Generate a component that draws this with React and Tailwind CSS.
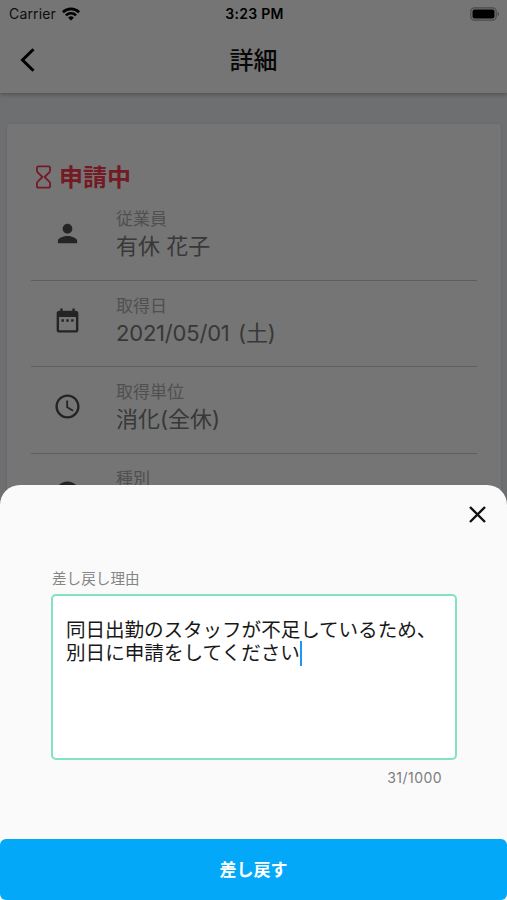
import React from "react";

const rows = [
  { id: "employee", label: "従業員", value: "有休 花子", icon: "person" },
  {
    id: "date",
    label: "取得日",
    value: "2021/05/01 (土)",
    icon: "calendar",
    spacing: "tracking-[-0.2px] [word-spacing:2.5px]",
  },
  { id: "unit", label: "取得単位", value: "消化(全休)", icon: "clock" },
  { id: "type", label: "種別", value: "有給休暇", icon: "help" },
];

const iconPaths = {
  person:
    "M12 12c2.21 0 4-1.79 4-4s-1.79-4-4-4-4 1.79-4 4 1.79 4 4 4zm0 2c-2.67 0-8 1.34-8 4v2h16v-2c0-2.66-5.33-4-8-4z",
  calendar:
    "M9 11H7v2h2v-2zm4 0h-2v2h2v-2zm4 0h-2v2h2v-2zm2-7h-1V2h-2v2H8V2H6v2H5c-1.11 0-1.99.9-1.99 2L3 20c0 1.1.89 2 2 2h14c1.1 0 2-.9 2-2V6c0-1.1-.9-2-2-2zm0 16H5V9h14v11z",
  clock:
    "M11.99 2C6.47 2 2 6.48 2 12s4.47 10 9.99 10C17.52 22 22 17.52 22 12S17.52 2 11.99 2zM12 20c-4.42 0-8-3.58-8-8s3.58-8 8-8 8 3.58 8 8-3.58 8-8 8zm.5-13H11v6l5.25 3.15.75-1.23-4.5-2.67z",
  help: "M12 2C6.48 2 2 6.48 2 12s4.48 10 10 10 10-4.48 10-10S17.52 2 12 2zm1 17h-2v-2h2v2z",
};

const StatusBar = () => (
  <div className="grid h-[27px] grid-cols-3 items-center pr-[7px] pl-[9px] font-[Inter,'Liberation_Sans',sans-serif] text-[14px] text-black">
    <div className="flex items-center gap-[6px]">
      <span className="tracking-[0.15px] text-[#222]">Carrier</span>
      <svg width="18" height="14" viewBox="0 0 18 14" fill="none" stroke="currentColor" strokeWidth="2.6">
        <path d="M.9 5.2a11.6 11.6 0 0 1 16.2 0" />
        <path d="M3.9 8.4a7.3 7.3 0 0 1 10.2 0" />
        <path d="M9 13.6 6.1 10.7a4.1 4.1 0 0 1 5.8 0z" fill="currentColor" stroke="none" />
      </svg>
    </div>
    <span className="text-center font-semibold tracking-[0.3px] whitespace-nowrap">3:23 PM</span>
    <svg className="justify-self-end" width="30" height="14" viewBox="0 0 30 14">
      <rect x=".8" y=".8" width="25.4" height="12.4" rx="3.6" fill="none" stroke="#a0a0a0" strokeWidth="1.2" />
      <rect x="2.5" y="2.5" width="22" height="9" rx="2" fill="#000" />
      <path d="M27.6 4.8c2 .8 2 3.6 0 4.4z" fill="#a0a0a0" />
    </svg>
  </div>
);

const Header = () => (
  <header className="relative z-10 h-[93px] shrink-0 bg-white shadow-[0_1px_5px_rgba(0,0,0,0.35)]">
    <StatusBar />
    <div className="grid h-[66px] grid-cols-[60px_1fr_60px] items-center">
      <svg className="ml-[18px]" width="18" height="26" viewBox="0 0 18 26" fill="none" stroke="#000" strokeWidth="3">
        <path d="M15.5 2.2 4.5 13l11 10.8" />
      </svg>
      <h1 className="pt-[1px] text-center text-[24px] font-medium text-[#111]">詳細</h1>
    </div>
  </header>
);

const DetailRow = ({ label, value, icon, spacing }) => (
  <div className="flex h-[86.6px] shrink-0 border-b-[1.5px] border-[#cecece] pt-[12px]">
    <div className="flex w-[85px] shrink-0 pt-[13px] pl-[21.5px]">
      <svg width="29" height="29" viewBox="0 0 24 24" fill="#505050">
        <path d={iconPaths[icon]} />
      </svg>
    </div>
    <div>
      <div className="text-[17px] leading-[26px] text-[#aeaeae]">{label}</div>
      <div className={`text-[22px] leading-[28px] text-[#7a7a7a] ${spacing || ""}`}>{value}</div>
    </div>
  </div>
);

const DetailCard = () => (
  <main className="mr-[6px] ml-[7px] mt-[31px] h-[800px] rounded-[3px] bg-white px-[24px] pt-[35px] shadow-[0_0_3px_rgba(0,0,0,0.12)]">
    <div className="flex h-[35px] items-center gap-[7px] pl-[4px] text-[#fb3a50]">
      <svg width="17" height="24" viewBox="0 0 17 24" fill="none" stroke="currentColor" strokeWidth="1.8" strokeLinejoin="round">
        <path d="M3.6 1.3h9.8a1.7 1.7 0 0 1 1.7 1.7v2.4c0 .8-.3 1.4-.8 1.900L9.600 12l4.700 4.700c.5.5.8 1.100.8 1.900V21a1.700 1.700 0 0 1-1.700 1.700H3.600A1.700 1.700 0 0 1 1.900 21v-2.400c0-.8.3-1.400.8-1.900L7.400 12 2.700 7.300c-.5-.5-.8-1.100-.8-1.900V3a1.700 1.700 0 0 1 1.700-1.700z" />
      </svg>
      <h2 className="pt-[2px] text-[24px] font-bold">申請中</h2>
    </div>
    {rows.map((row) => (
      <DetailRow key={row.id} {...row} />
    ))}
  </main>
);

const RejectSheet = () => (
  <section className="flex h-[415px] flex-col rounded-t-[20px] bg-[#fafafa]">
    <div className="flex h-[58px] justify-end pt-[20px] pr-[20px]">
      <svg width="19" height="19" viewBox="0 0 19 19" fill="none" stroke="#111" strokeWidth="2.4">
        <path d="m2 2 15 15M17 2 2 17" />
      </svg>
    </div>
    <div className="mr-[50px] ml-[51px] flex flex-1 flex-col pt-[24px]">
      <label className="pl-[1px] text-[14.6px] leading-[24px] text-[#858585]">差し戻し理由</label>
      <div className="mt-[3px] h-[166px] rounded-[5px] border-2 border-[#82e2c2] bg-white px-[13px] pt-[23px] text-[19.6px] leading-[23px] text-[#181818]">
        <p className="tracking-[-0.08px] whitespace-nowrap">同日出勤のスタッフが不足しているため、</p>
        <p className="flex items-center whitespace-nowrap">
          別日に申請をしてください
          <span className="-my-1 h-[25px] w-[2.5px] bg-[#2196f3]" />
        </p>
      </div>
      <div className="pt-[6px] pr-[15px] text-right text-[14px] leading-[24px] tracking-[0.45px] text-[#7d7d7d]">31/1000</div>
    </div>
    <button className="h-[61px] shrink-0 rounded-[6px] bg-[#03a9f8] pt-[2px] text-[17px] font-bold text-white">
      差し戻す
    </button>
  </section>
);

export default function App() {
  return (
    <div className="relative h-[900px] w-full overflow-hidden bg-[#eff2f7] font-[Inter,'Noto_Sans_CJK_JP',sans-serif]">
      <Header />
      <DetailCard />
      <div className="absolute inset-0 z-10 bg-black/54" />
      <div className="absolute inset-x-0 bottom-0 z-20">
        <RejectSheet />
      </div>
    </div>
  );
}
